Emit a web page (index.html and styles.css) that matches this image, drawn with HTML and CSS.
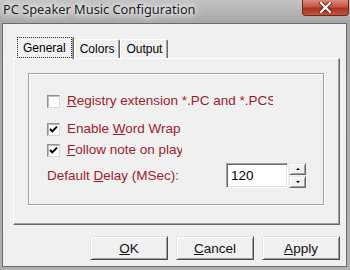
FILE: index.html
```html
<!DOCTYPE html>
<html lang="en">
<head>
  <meta charset="UTF-8">
  <title>PC Speaker Music Configuration</title>
  <link rel="stylesheet" href="styles.css">
</head>
<body>
  <div class="window">
    <div class="titlebar">
      <span class="title">PC Speaker Music Configuration</span>
      <span class="close">
        <svg width="13" height="11" viewBox="0 0 13 11">
          <path d="M2 1 L11 10 M11 1 L2 10" stroke="#5a2018" stroke-width="4" stroke-linecap="square"/>
          <path d="M2 1 L11 10 M11 1 L2 10" stroke="#fff" stroke-width="2.2" stroke-linecap="square"/>
        </svg>
      </span>
    </div>

    <div class="client">
      <div class="tabs">
        <div class="tab active"><span class="focus">General</span></div>
        <div class="tab">Colors</div>
        <div class="tab">Output</div>
      </div>

      <div class="panel">
        <div class="group">
          <label class="check row-first">
            <span class="box"></span>
            <span class="text text-wide"><u>R</u>egistry extension *.PC and *.PCS</span>
          </label>
          <label class="check row-second">
            <span class="box">
              <svg width="11" height="11" viewBox="0 0 11 11"><path d="M2 5 L4.3 7.4 L9 2.6" fill="none" stroke="#000" stroke-width="2"/></svg>
            </span>
            <span class="text text-narrow">Enable <u>W</u>ord Wrap</span>
          </label>
          <label class="check row-third">
            <span class="box">
              <svg width="11" height="11" viewBox="0 0 11 11"><path d="M2 5 L4.3 7.4 L9 2.6" fill="none" stroke="#000" stroke-width="2"/></svg>
            </span>
            <span class="text text-narrow"><u>F</u>ollow note on play</span>
          </label>
          <div class="delay">
            <span class="delay-label">Default <u>D</u>elay (MSec):</span>
            <span class="edit">120</span>
            <span class="spin">
              <span class="spin-btn"><span class="arrow-up"></span></span>
              <span class="spin-btn"><span class="arrow-down"></span></span>
            </span>
          </div>
        </div>
      </div>

      <div class="buttons">
        <button class="btn"><u>O</u>K</button>
        <button class="btn"><u>C</u>ancel</button>
        <button class="btn"><u>A</u>pply</button>
      </div>
    </div>
  </div>
</body>
</html>
```

FILE: styles.css
```css
body {
  margin: 0;
  font-family: "Liberation Sans", Arial, sans-serif;
  font-size: 13px;
}
.window {
  width: 350px;
  height: 270px;
  box-sizing: border-box;
  display: flex;
  flex-direction: column;
  background: linear-gradient(#c2c2c2, #a8a8a8 22px, #b0b0b0);
}
.titlebar {
  height: 23px;
  flex-shrink: 0;
  display: flex;
  align-items: flex-start;
}
.title {
  padding: 1px 0 0 3px;
  font-family: "Noto Sans", "Open Sans", sans-serif;
  font-size: 12.8px;
  line-height: 16px;
  color: #1c1c1c;
  text-shadow: 0 0 5px #fff, 0 0 9px #fff, 0 0 12px #eee;
}
.close {
  margin-left: auto;
  margin-right: 1px;
  width: 47px;
  height: 16px;
  box-sizing: border-box;
  display: flex;
  justify-content: center;
  align-items: center;
  border: 1px solid #6a2a20;
  border-top: none;
  border-radius: 0 0 4px 4px;
  background: linear-gradient(#dc8a7c, #c55442 45%, #a8321e 55%, #c4523c);
}
.client {
  flex: 1;
  margin: 0 3px 3px 2px;
  padding: 12px 6px 0 10px;
  border: 1px solid #6c6c6c;
  background: #f0f0f0;
}

/* tabs */
.tabs {
  display: flex;
  align-items: flex-end;
  height: 22px;
  margin-left: 3px;
  font-size: 12px;
}
.tab {
  height: 19px;
  box-sizing: border-box;
  display: flex;
  align-items: center;
  padding: 0 5px;
  border-top: 1px solid #fff;
  border-left: 1px solid #fff;
  border-right: 1px solid #696969;
  border-radius: 2px 2px 0 0;
  box-shadow: inset -1px 0 #a0a0a0;
  background: #f0f0f0;
  color: #000;
}
.tab.active {
  position: relative;
  z-index: 1;
  height: 23px;
  margin-bottom: -1px;
  padding: 1px 2px 2px 1px;
}
.focus {
  display: flex;
  align-items: center;
  height: 100%;
  padding: 0 5px;
  outline: 1px dotted #222;
}

/* panel */
.panel {
  width: 327px;
  height: 167px;
  box-sizing: border-box;
  padding: 14px 15px 19px 14px;
  border: 1px solid;
  border-color: #fff #696969 #696969 #fff;
  box-shadow: inset -1px -1px #a0a0a0;
}
.group {
  height: 132px;
  box-sizing: border-box;
  padding: 19px 0 0 18px;
  border: 1px solid #a0a0a0;
  box-shadow: inset 1px 1px #fff, 1px 1px #fff;
  color: #9e1b2f;
  font-size: 13.5px;
}
.check {
  display: flex;
  align-items: center;
  height: 16px;
  gap: 7px;
}
.row-second {
  margin-top: 12px;
}
.row-third {
  margin-top: 5px;
}
.box {
  width: 13px;
  height: 13px;
  box-sizing: border-box;
  display: flex;
  align-items: center;
  justify-content: center;
  border: 1px solid;
  border-color: #8f8f8f #d8d8d8 #d8d8d8 #8f8f8f;
  box-shadow: inset 1px 1px #bdbdbd;
  background: #fff;
}
.text {
  white-space: nowrap;
  overflow: hidden;
  line-height: 16px;
}
.text-wide {
  width: 206px;
}
.text-narrow {
  width: 115px;
}
u {
  text-underline-offset: 1px;
}

/* delay row */
.delay {
  display: flex;
  align-items: center;
  height: 25px;
  margin-top: 5px;
}
.delay-label {
  width: 179px;
}
.edit {
  width: 62px;
  height: 25px;
  box-sizing: border-box;
  display: flex;
  align-items: center;
  padding-left: 4px;
  border: 1px solid;
  border-color: #a0a0a0 #fff #fff #a0a0a0;
  box-shadow: inset 1px 1px #696969, inset -1px -1px #e3e3e3;
  background: #fff;
  color: #000;
}
.spin {
  display: flex;
  flex-direction: column;
  gap: 1px;
  margin-left: 1px;
}
.spin-btn {
  width: 17px;
  height: 12px;
  box-sizing: border-box;
  display: flex;
  align-items: center;
  justify-content: center;
  border: 1px solid;
  border-color: #e3e3e3 #696969 #696969 #e3e3e3;
  box-shadow: inset 1px 1px #fff, inset -1px -1px #a0a0a0;
  background: #f0f0f0;
}
.arrow-up {
  border-left: 2px solid transparent;
  border-right: 2px solid transparent;
  border-bottom: 2px solid #000;
}
.arrow-down {
  border-left: 2px solid transparent;
  border-right: 2px solid transparent;
  border-top: 2px solid #000;
}

/* dialog buttons */
.buttons {
  display: flex;
  justify-content: flex-end;
  gap: 8px;
  margin-top: 11px;
}
.btn {
  width: 78px;
  height: 24px;
  padding: 0;
  font-family: "Liberation Sans", Arial, sans-serif;
  font-size: 13.5px;
  color: #111;
  border: 1px solid;
  border-color: #e3e3e3 #4a4a4a #4a4a4a #e3e3e3;
  box-shadow: inset 1px 1px #fff, inset -1px -1px #a0a0a0;
  background: #f0f0f0;
}
```
